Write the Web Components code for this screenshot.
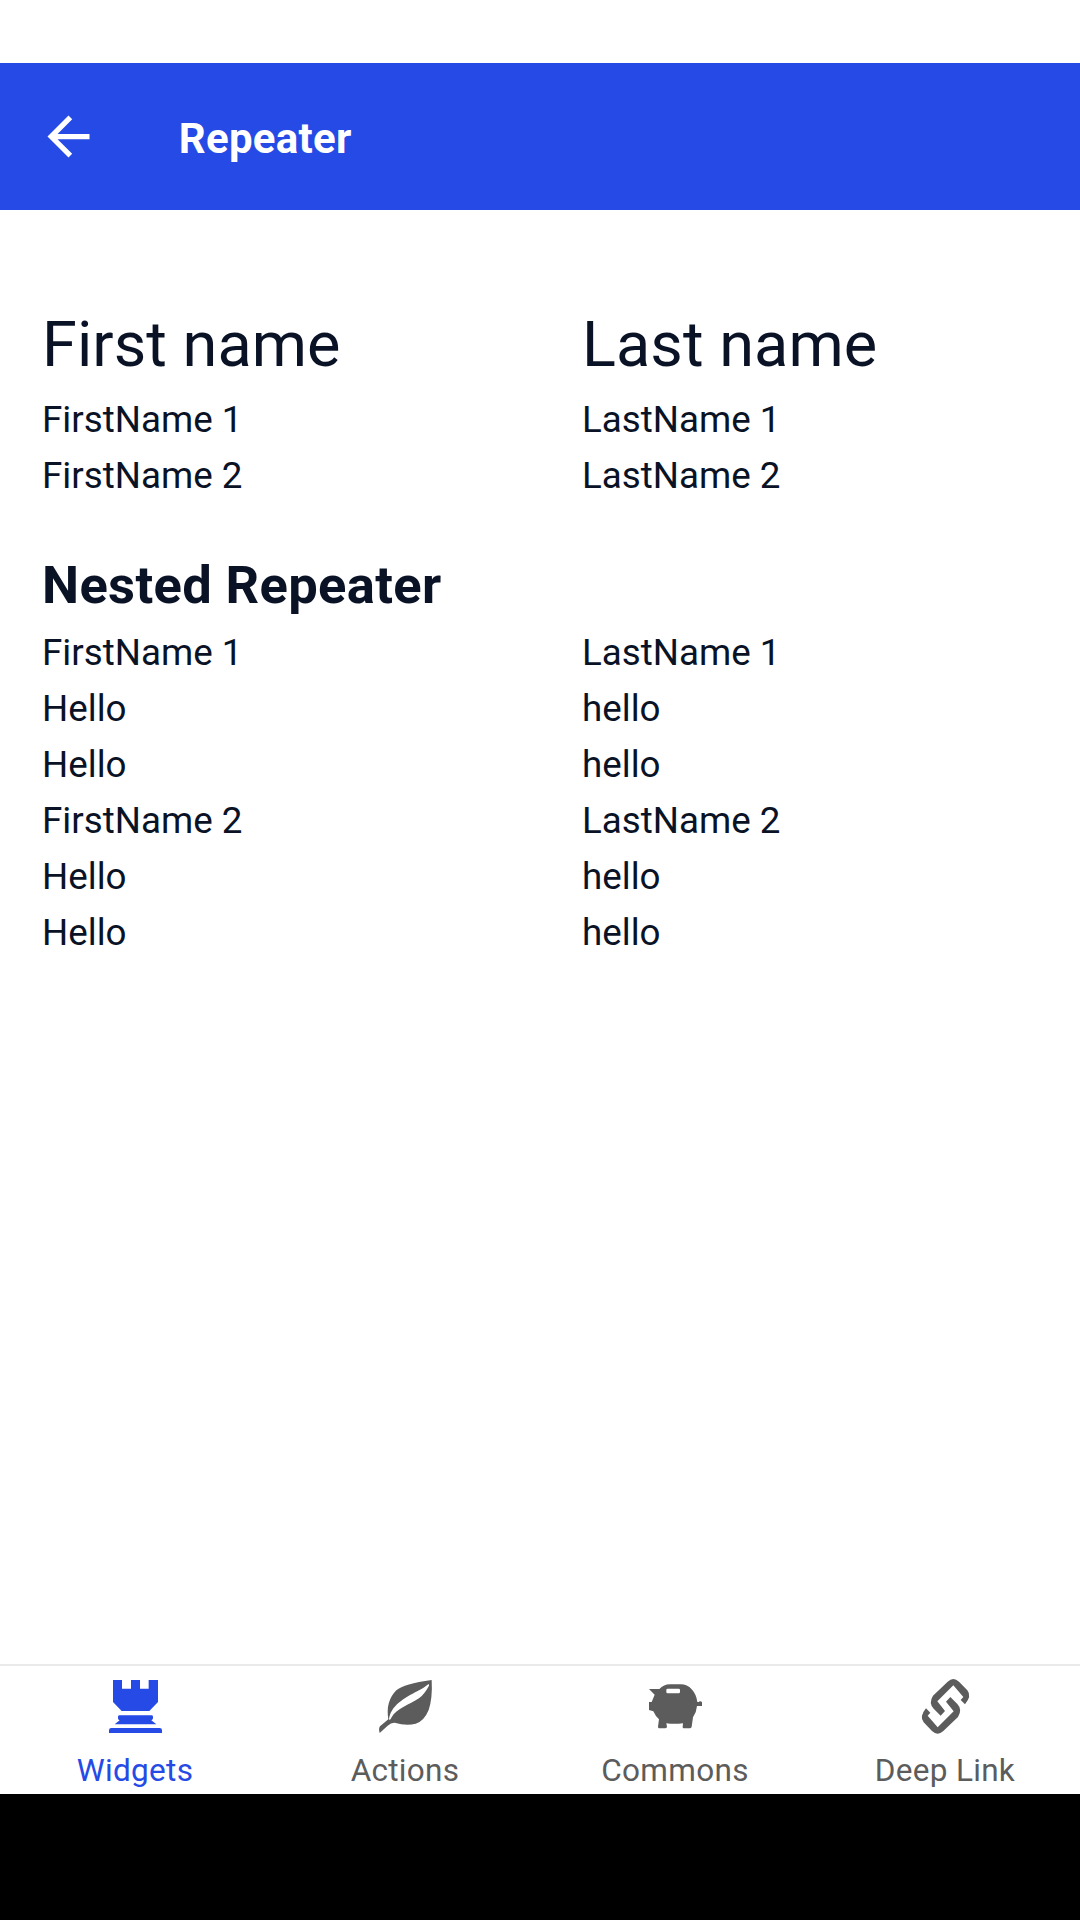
<!DOCTYPE html>
<html lang="en">
<head>
<meta charset="utf-8">
<title>Repeater</title>
<style>
html,body{margin:0;padding:0;background:#fff}
body{width:1080px;height:1920px;overflow:hidden;font-family:Roboto,"Liberation Sans",sans-serif}
</style>
</head>
<body>
<app-screen>
  <app-header slot="header">Repeater</app-header>
  <name-row size="title"><span>First name</span><span slot="last">Last name</span></name-row>
  <name-row><span>FirstName 1</span><span slot="last">LastName 1</span></name-row>
  <name-row><span>FirstName 2</span><span slot="last">LastName 2</span></name-row>
  <section-heading>Nested Repeater</section-heading>
  <name-row><span>FirstName 1</span><span slot="last">LastName 1</span></name-row>
  <name-row><span>Hello</span><span slot="last">hello</span></name-row>
  <name-row><span>Hello</span><span slot="last">hello</span></name-row>
  <name-row><span>FirstName 2</span><span slot="last">LastName 2</span></name-row>
  <name-row><span>Hello</span><span slot="last">hello</span></name-row>
  <name-row><span>Hello</span><span slot="last">hello</span></name-row>
  <tab-bar slot="tabs">
    <tab-item icon="rook" active>Widgets</tab-item>
    <tab-item icon="leaf">Actions</tab-item>
    <tab-item icon="piggy">Commons</tab-item>
    <tab-item icon="link">Deep Link</tab-item>
  </tab-bar>
</app-screen>
<script>
const define = (name, html) => customElements.define(name, class extends HTMLElement {
  constructor() {
    super();
    this.attachShadow({ mode: 'open' }).innerHTML = html;
  }
});

define('app-screen', `
<style>
:host{display:flex;flex-direction:column;box-sizing:border-box;width:1080px;height:1920px;padding-top:63px;background:#fff;color:#0a1226}
main{flex:1;display:flex;flex-direction:column;padding:97px 0 0 42px}
.system{height:126px;background:#000}
</style>
<slot name="header"></slot><main><slot></slot></main><slot name="tabs"></slot><div class="system"></div>`);

define('app-header', `
<style>
:host{display:flex;align-items:center;height:147px;background:#264ae5;color:#fff;font-size:42px;font-weight:700;padding-left:37.2px}
svg{width:63px;height:63px;flex:none;fill:#fff}
h1{margin:0 0 0 78.6px;font:inherit;line-height:50px;padding-top:4px;letter-spacing:.28px}
</style>
<svg viewBox="0 0 24 24"><path d="M20 11H7.83l5.59-5.59L12 4l-8 8 8 8 1.41-1.41L7.83 13H20z"/></svg>
<h1><slot></slot></h1>`);

define('name-row', `
<style>
:host{display:flex;flex:none;height:56px;line-height:56px;font-size:36.75px;white-space:pre}
:host([size=title]){height:85px;line-height:75px;font-size:63px;letter-spacing:.06px}
div{flex:none;width:540px}
div:last-child{width:498px}
</style>
<div><slot></slot></div><div><slot name="last"></slot></div>`);

define('section-heading', `
<style>
:host{display:block;flex:none;height:62px;line-height:62px;padding-top:50px;padding-bottom:9px;font-size:52.5px;font-weight:700;letter-spacing:.34px}
</style><slot></slot>`);

define('tab-bar', `
<style>
:host{display:flex;box-sizing:border-box;height:130px;border-top:2px solid #eaeaea;background:#fff}
</style><slot></slot>`);

/* Icons share one 162-unit square, drawn at 54px. */
const half = 'M122 182L101 161Q85 144 99 122L143 80Q160 64 177 80L202 106Q216 123 195 148L182 135L190 126L160 91L112 139L135 168Z';
const icons = {
  rook: '<path d="M69 75H96V101H123V75H150V101H176V75H204V141L178 168H95L69 141ZM89 181H184Q189 181 189 185V190Q189 193 185 195L184 196L199 208H74L89 196L87 195Q84 193 84 190V185Q84 181 89 181ZM64 219H209Q216 219 216 226V234H57V226Q57 219 64 219Z"/>',
  leaf: '<path fill-rule="evenodd" d="M215 75Q218 129 206 165Q192 199 167 206Q138 213 104 203Q94 202 83 212L59 234Q55 220 60 214L85 193Q76 139 109 106Q132 86 215 75ZM206 87Q193 98 173 108C132 129 91 153 87 194Q92 195 94 188C108 161 148 149 177 130Q193 118 207 92Q207 87 206 87Z"/>',
  piggy: '<path fill-rule="evenodd" d="M57 102H88Q101 88 120 88H152Q172 88 185 103Q199 118 202 141H206Q209 141 209 138Q213 139 216 141V153H201Q200 170 189 187L185 215Q184 220 179 220H162Q157 220 158 215L159 205Q133 208 109 205L111 215Q110 220 105 220H88Q84 220 84 215L87 193Q76 183 70 169L57 165V141H65L74 119ZM113 101Q109 101 109 105V111Q109 115 113 115H146Q150 115 150 111V105Q150 101 146 101Z"/>',
  link: `<path d="${half}"/><path transform="rotate(180 136.5 154)" d="${half}"/>`
};

customElements.define('tab-item', class extends HTMLElement {
  constructor() {
    super();
    this.attachShadow({ mode: 'open' });
  }
  connectedCallback() {
    this.shadowRoot.innerHTML = `
<style>
:host{flex:1;display:flex;flex-direction:column;align-items:center;color:#5c5c5c;padding-top:13px;font-size:31.5px}
:host([active]){color:#264ae5}
svg{width:54px;height:54px;flex:none;fill:currentColor;overflow:visible}
span{line-height:38px;margin-top:19px;letter-spacing:.3px}
</style>
<svg viewBox="54 72 162 162">${icons[this.getAttribute('icon')]}</svg><span><slot></slot></span>`;
  }
});
</script>
</body>
</html>
